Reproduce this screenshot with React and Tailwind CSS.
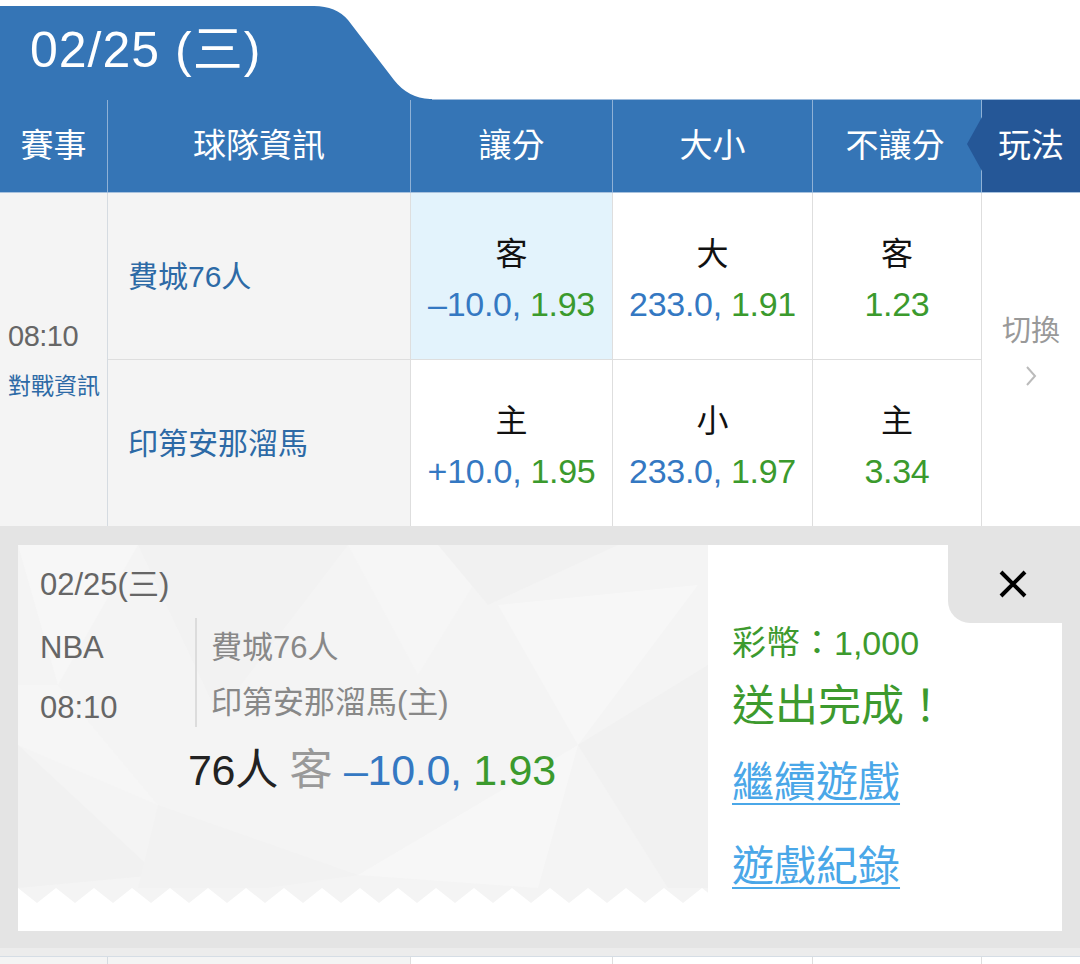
import React from 'react';

const COLS = 'grid grid-cols-[108px_303px_202px_200px_169px_98px]';

function OddsCell({ label, line, price, highlight, bordered }) {
  return (
    <div
      className={`flex flex-col items-center justify-center pt-[9px] border-r border-[#dedede] ${
        bordered ? 'border-b' : ''
      } ${highlight ? 'bg-[#e3f3fc]' : 'bg-white'}`}
    >
      <div className="text-[32px] leading-[46px] text-[#111]">{label}</div>
      <div className="text-[34px] leading-[54px] tracking-[-0.3px]">
        {line && <span className="text-[#3478c2]">{line}, </span>}
        <span className="text-[#3b9a2d]">{price}</span>
      </div>
    </div>
  );
}

function TicketPattern() {
  // faint low-poly facets behind the ticket
  return (
    <svg className="absolute inset-0" width="690" height="343" viewBox="0 0 690 343">
      <polygon points="0,0 120,0 40,140" fill="#f7f7f7" />
      <polygon points="120,0 330,0 200,170" fill="#f2f2f2" />
      <polygon points="330,0 480,0 400,130" fill="#f6f6f6" />
      <polygon points="420,0 600,0 470,60" fill="#f1f1f1" />
      <polygon points="480,60 680,40 560,200" fill="#f7f7f7" />
      <polygon points="0,200 140,330 0,343" fill="#f1f1f1" />
      <polygon points="140,260 340,330 250,343 120,343" fill="#f2f2f2" />
      <polygon points="560,200 690,120 690,343 650,343" fill="#f1f1f1" />
      <polygon points="340,330 560,200 520,343" fill="#f7f7f7" />
      <polygon points="0,140 40,140 140,260 0,200" fill="#f6f6f6" />
    </svg>
  );
}

function Zigzag() {
  const pts = ['0,0'];
  for (let x = 0; x <= 690; x += 38) {
    pts.push(`${x + 19},15`, `${x + 38},0`);
  }
  pts.push('690,0');
  return (
    <svg width="690" height="15" viewBox="0 0 690 15" className="block">
      <polygon points={pts.join(' ')} fill="#f4f4f4" />
    </svg>
  );
}

export default function App() {
  return (
    <div className="w-[1080px] h-[964px] overflow-hidden bg-white font-['Liberation_Sans','Noto_Sans_CJK_TC',sans-serif]">
      {/* date tab */}
      <div className="flex pt-[6px] h-[100px]">
        <div className="w-[314px] bg-[#3575b6] text-white text-[50px] leading-[88px] pl-[30px] tracking-[1px]">
          02/25 (三)
        </div>
        <svg width="118" height="94" viewBox="0 0 118 94" className="block">
          <path d="M0 0 Q22 0 34 14 L80 74 Q94 92 116 93 L118 93 L118 94 L0 94 Z" fill="#3575b6" />
        </svg>
        <div className="flex-1 self-end border-b border-[#9dbbdc]" />
      </div>

      {/* header */}
      <div className={`${COLS} h-[93px] bg-[#3575b6] text-white text-[33px] border-b border-[#a8c2de]`}>
        <div className="flex items-center justify-center border-r border-[#8fb1d6]">賽事</div>
        <div className="flex items-center justify-center border-r border-[#8fb1d6]">球隊資訊</div>
        <div className="flex items-center justify-center border-r border-[#8fb1d6]">讓分</div>
        <div className="flex items-center justify-center border-r border-[#8fb1d6]">大小</div>
        <div className="flex items-center justify-center border-r border-[#8fb1d6] pr-[4px]">不讓分</div>
        <div className="relative flex items-center justify-center bg-[#255797]">
          <svg className="absolute left-[-15px] top-[17px]" width="15" height="54" viewBox="0 0 15 54">
            <polygon points="15,0 0,27 15,54" fill="#255797" />
          </svg>
          玩法
        </div>
      </div>

      {/* match row */}
      <div className={`${COLS} grid-rows-[167px_166px]`}>
        <div className="row-span-2 flex flex-col justify-center pl-[8px] bg-[#f4f4f4] border-r border-[#d5dbe1]">
          <div className="text-[29px] leading-[40px] text-[#666] tracking-[-0.5px]">08:10</div>
          <div className="text-[23px] leading-[36px] text-[#2d6aa6] mt-[12px]">對戰資訊</div>
        </div>
        <div className="flex items-center pl-[20px] bg-[#f4f4f4] border-r border-b border-[#dedede] text-[30px] text-[#2d6aa6]">
          費城76人
        </div>
        <OddsCell label="客" line="–10.0" price="1.93" highlight bordered />
        <OddsCell label="大" line="233.0" price="1.91" bordered />
        <OddsCell label="客" price="1.23" bordered />
        <div className="row-span-2 flex flex-col items-center justify-center bg-white pb-[22px]">
          <div className="text-[29px] leading-[40px] text-[#999]">切換</div>
          <svg width="14" height="22" viewBox="0 0 14 22" className="mt-[14px]">
            <path d="M3 2 L11 11 L3 20" fill="none" stroke="#bbb" strokeWidth="2" />
          </svg>
        </div>
        <div className="flex items-center pl-[20px] bg-[#f4f4f4] border-r border-[#dedede] text-[30px] text-[#2d6aa6]">
          印第安那溜馬
        </div>
        <OddsCell label="主" line="+10.0" price="1.95" />
        <OddsCell label="小" line="233.0" price="1.97" />
        <OddsCell label="主" price="3.34" />
      </div>

      {/* bet confirmation */}
      <div className="h-[422px] bg-[#e4e4e4] pt-[19px] px-[18px] pb-[17px]">
        <div className="flex h-full bg-white">
          <div className="w-[690px] flex flex-col">
            <div className="relative h-[343px] bg-[#f4f4f4] overflow-hidden">
              <TicketPattern />
              <div className="relative pl-[22px] pt-[20px]">
                <div className="text-[31px] leading-[40px] text-[#666]">02/25(三)</div>
                <div className="flex h-[109px] mt-[13px]">
                  <div className="w-[155px] text-[31px] text-[#666]">
                    <div className="leading-[60px]">NBA</div>
                    <div className="leading-[60px]">08:10</div>
                  </div>
                  <div className="border-l-2 border-[#dcdcdc] pl-[14px] text-[31px] text-[#888]">
                    <div className="leading-[60px]">費城76人</div>
                    <div className="leading-[50px]">印第安那溜馬(主)</div>
                  </div>
                </div>
                <div className="mt-[18px] pl-[148px] text-[43px] leading-[50px] tracking-[-0.3px]">
                  <span className="text-[#222]">76人 </span>
                  <span className="text-[#999]">客 </span>
                  <span className="text-[#3478c2]">–10.0, </span>
                  <span className="text-[#3b9a2d]">1.93</span>
                </div>
              </div>
            </div>
            <Zigzag />
          </div>
          <div className="flex-1 flex flex-col">
            <div className="flex justify-end">
              <div className="w-[114px] h-[78px] bg-[#e4e4e4] rounded-bl-[22px] flex items-center justify-center pl-[16px]">
                <svg width="30" height="30" viewBox="0 0 30 30">
                  <path d="M3 3 L27 27 M27 3 L3 27" stroke="#000" strokeWidth="4" />
                </svg>
              </div>
            </div>
            <div className="pl-[24px]">
              <div className="text-[34px] leading-[40px] text-[#3d9a2e]">彩幣：1,000</div>
              <div className="mt-[13px] text-[43px] leading-[60px] text-[#3d9a2e]">送出完成！</div>
              <div className="mt-[19px] text-[42px] leading-[56px] text-[#4aa7e8] underline decoration-[2px] underline-offset-[6px]">
                繼續遊戲
              </div>
              <div className="mt-[28px] text-[42px] leading-[56px] text-[#4aa7e8] underline decoration-[2px] underline-offset-[6px]">
                遊戲紀錄
              </div>
            </div>
          </div>
        </div>
      </div>

      {/* next row peeking */}
      <div className="h-[9px] bg-[#ececec] border-b border-[#d5dde5]" />
      <div className={`${COLS} h-[10px]`}>
        <div className="bg-[#f4f4f4] border-r border-[#d5dbe1]" />
        <div className="bg-[#f4f4f4] border-r border-[#dedede]" />
        <div className="border-r border-[#dedede]" />
        <div className="border-r border-[#dedede]" />
        <div className="border-r border-[#dedede]" />
        <div />
      </div>
    </div>
  );
}
